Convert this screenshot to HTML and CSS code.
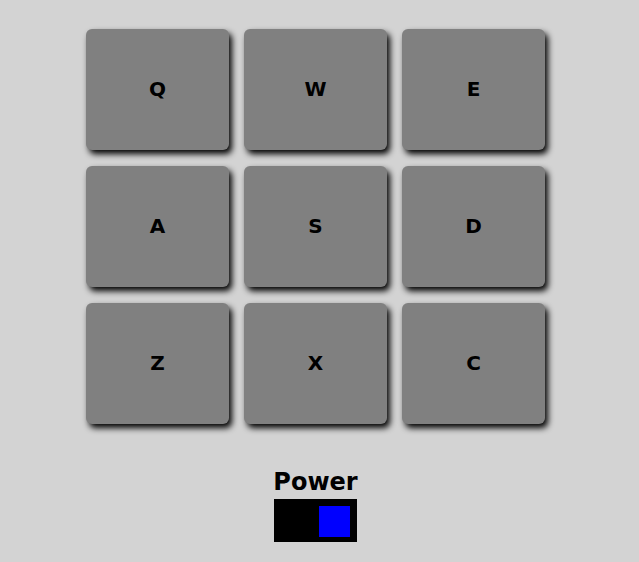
FILE: index.html
```html
<!DOCTYPE html>
<html>
<head>
<meta charset="utf-8">
<link rel="stylesheet" href="styles.css">
</head>
<body>
<div class="machine">
  <div class="pads">
    <div class="pad">Q</div>
    <div class="pad">W</div>
    <div class="pad">E</div>
    <div class="pad">A</div>
    <div class="pad">S</div>
    <div class="pad">D</div>
    <div class="pad">Z</div>
    <div class="pad">X</div>
    <div class="pad">C</div>
  </div>
  <div class="power">
    <div class="power-label">Power</div>
    <div class="switch"><div class="knob"></div></div>
  </div>
</div>
</body>
</html>
```
FILE: styles.css
```css
html, body {
  margin: 0;
  padding: 0;
  background: #d3d3d3;
}
body {
  width: 631px;
  height: 562px;
  overflow: hidden;
  font-family: "DejaVu Sans", Verdana, sans-serif;
}
.machine {
  display: flex;
  flex-direction: column;
  align-items: center;
  padding-top: 29px;
}
.pads {
  display: grid;
  grid-template-columns: repeat(3, 143px);
  grid-auto-rows: 121px;
  column-gap: 15px;
  row-gap: 16px;
}
.pad {
  background: #808080;
  border-radius: 6px;
  box-shadow: 3px 4px 6px #000;
  display: flex;
  align-items: center;
  justify-content: center;
  font-weight: bold;
  font-size: 20px;
  padding-bottom: 1px;
  box-sizing: border-box;
  color: #000;
}
.power {
  margin-top: 45px;
  display: flex;
  flex-direction: column;
  align-items: center;
}
.power-label {
  font-weight: bold;
  font-size: 24px;
  line-height: 26px;
  color: #000;
}
.switch {
  margin-top: 4px;
  width: 83px;
  height: 43px;
  background: #000;
  display: flex;
  justify-content: flex-end;
  align-items: flex-start;
  box-sizing: border-box;
  padding: 7px 7px 0 0;
}
.knob {
  width: 31px;
  height: 31px;
  background: #0000ff;
}
```
